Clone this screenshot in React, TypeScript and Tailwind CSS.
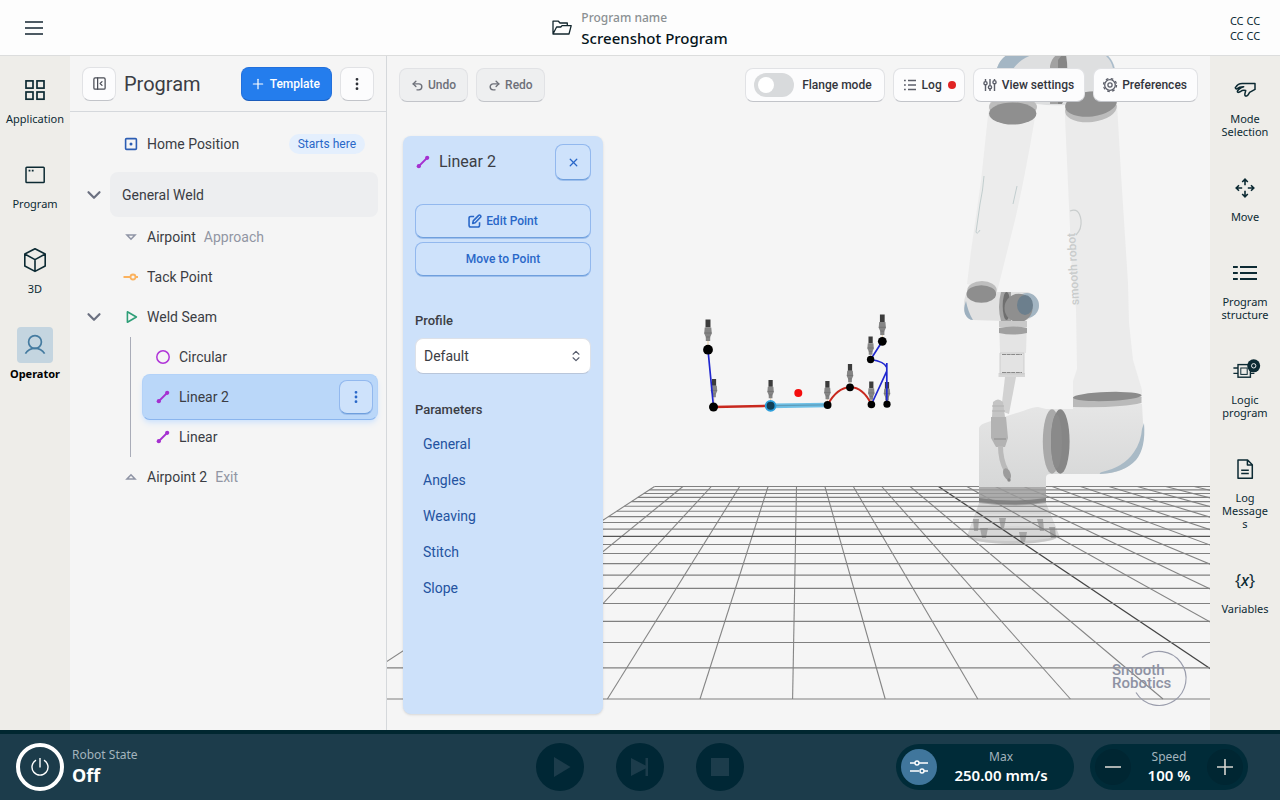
import { useState, type ReactNode } from 'react'
import { ChevronDown, ChevronsUpDown, EllipsisVertical, PanelLeftClose, Plus, Redo2, Undo2, X } from 'lucide-react'

const BUTTON = 'flex items-center rounded-lg border border-[#e1e2e5] border-b-[#c2c4c9] text-xs font-medium'
const BLUE_BUTTON = 'flex items-center justify-center rounded-lg border border-[#92b8ee] border-b-[#6f9fdd] bg-[#cee2fb] text-xs font-medium text-[#2967c8] shadow-[0_1px_0_#9dbfec]'

// ── Shell icons ───────────────────────────────────────────────────
function RailIcon({ children }: { children: ReactNode }) {
  return (
    <svg viewBox="0 0 36 36" className="size-9" fill="none" stroke="currentColor" strokeWidth="1.7" aria-hidden="true">
      {children}
    </svg>
  )
}

const leftItems = [
  {
    label: 'Application',
    icon: (
      <RailIcon>
        <rect x="9" y="8.9" width="7" height="7.2" />
        <rect x="20" y="8.9" width="7" height="7.2" />
        <rect x="9" y="20" width="7" height="7.2" />
        <rect x="20" y="20" width="7" height="7.2" />
      </RailIcon>
    ),
  },
  {
    label: 'Program',
    icon: (
      <RailIcon>
        <rect x="9" y="10.2" width="18.2" height="15.4" rx="0.8" strokeWidth="1.5" />
        <path d="M11.6 13.7h1.8M14.8 13.7h1.8" strokeWidth="1.8" />
      </RailIcon>
    ),
  },
  {
    label: '3D',
    icon: (
      <RailIcon>
        <path d="M18 6.8 28.2 12v12L18 29.4 7.8 24V12ZM7.8 12 18 17.6 28.2 12M18 17.6v11.8" strokeWidth="1.6" strokeLinejoin="round" />
      </RailIcon>
    ),
  },
  {
    label: 'Operator',
    active: true,
    icon: (
      <RailIcon>
        <circle cx="18" cy="15" r="6.4" />
        <path d="M8.4 26.6C10.6 23 14 21.4 18 21.4s7.4 1.6 9.6 5.2" />
      </RailIcon>
    ),
  },
]

const rightItems = [
  {
    label: 'Mode Selection',
    icon: (
      <RailIcon>
        <path d="M8.8 15.2c1.2-2.2 3.5-3.8 6.4-3.8H28v6l-5.4 3c-1 1.5-1.6 3.3-3 3.6-1.6.2-2-.8-1.7-2.2l.8-3.2c-2-.5-3.7-.2-5 .8-1.5 1-3 1.4-3.4.4-.3-1.3 3.2-4.2 6.4-5-2.6-.1-5 .5-6.9 2-.8.4-1.8-.6-1.4-1.6Z" strokeWidth="1.5" strokeLinejoin="round" />
      </RailIcon>
    ),
  },
  {
    label: 'Move',
    icon: (
      <RailIcon>
        <path d="M18 15.2V9.4M15.2 12 18 9.2l2.8 2.8M18 20.8v5.8M15.2 24l2.8 2.8 2.8-2.8M15.2 18H9.4M12 15.2 9.2 18l2.8 2.8M20.8 18h5.8M24 15.2l2.8 2.8-2.8 2.8" strokeWidth="1.6" />
      </RailIcon>
    ),
  },
  {
    label: 'Program structure',
    icon: (
      <RailIcon>
        <path d="M6 12h4.8M13 12h17M6 18h4.8M13 18h17M6 24h4.8M13 24h17" strokeWidth="2" />
      </RailIcon>
    ),
  },
  {
    label: 'Logic program',
    icon: (
      <RailIcon>
        <rect x="11" y="11.6" width="12.4" height="12.6" strokeWidth="1.4" />
        <rect x="13.8" y="15" width="6.4" height="6.4" strokeWidth="1" />
        <path d="M6.4 15H11M6.4 20.4H11M23.4 20.4h4" strokeWidth="1.3" />
        <circle cx="26.7" cy="12.8" r="6.5" fill="currentColor" stroke="none" />
        <circle cx="26.7" cy="12.8" r="2.2" stroke="#e6e8e8" strokeWidth="1" />
      </RailIcon>
    ),
  },
  {
    label: 'Log Messages',
    icon: (
      <RailIcon>
        <path d="M11 9h9.6l4.7 4.7v13.6H11ZM20.4 9v5h4.9M14.2 19.2h7.6M14.2 22.4h7.6" strokeWidth="1.5" strokeLinejoin="round" />
      </RailIcon>
    ),
  },
  {
    label: 'Variables',
    icon: (
      <span className="flex size-9 items-center justify-center text-base">
        {'{'}
        <i className="font-medium">x</i>
        {'}'}
      </span>
    ),
  },
]

// ── Program tree icons ────────────────────────────────────────────
function TreeIcon({ children, className }: { children: ReactNode; className: string }) {
  return (
    <svg viewBox="0 0 24 24" className={`size-6 shrink-0 ${className}`} fill="none" stroke="currentColor" strokeWidth="1.6" aria-hidden="true">
      {children}
    </svg>
  )
}

const LinearIcon = () => (
  <TreeIcon className="text-[#a530d0]">
    <path d="M7.5 16.5 16.5 7.5" strokeWidth="1.8" />
    <circle cx="7.8" cy="16.2" r="2.1" fill="currentColor" stroke="none" />
    <circle cx="16.2" cy="7.8" r="2.1" fill="currentColor" stroke="none" />
  </TreeIcon>
)

function Row({ icon, label, note, expandable, children }: { icon: ReactNode; label: string; note?: string; expandable?: boolean; children?: ReactNode }) {
  return (
    <div className="flex h-10 items-center pl-3 pr-2">
      <div className="flex w-7">{expandable && <Expander label={label} />}</div>
      <div className="flex flex-1 items-center gap-1 pl-[9px]">
        {icon}
        <span>{label}</span>
        {note && <span className="ml-1 text-[#9195a3]">{note}</span>}
        {children}
      </div>
    </div>
  )
}

function Expander({ label }: { label: string }) {
  return (
    <button aria-label={`Collapse ${label}`} className="flex size-6 items-center justify-center text-[#6b7080]">
      <ChevronDown size={22} strokeWidth={2.4} />
    </button>
  )
}

function ProgramPanel() {
  return (
    <section className="flex w-[317px] shrink-0 flex-col border-r border-[#d5d8db]">
      <div className="flex h-14 items-center border-b border-[#d5d8dc] px-3">
        <button aria-label="Hide panel" className={`${BUTTON} size-[34px] justify-center bg-[#fcfcfd] text-[#494c55]`}>
          <PanelLeftClose size={15} />
        </button>
        <h1 className="ml-2 flex-1 text-xl text-[#3b3d44]">Program</h1>
        <button className="flex h-[34px] items-center gap-1 rounded-lg border border-[#2270dc] border-b-[#1b5cbb] bg-[#247ded] pl-2 pr-[11px] text-xs font-medium text-white">
          <Plus size={16} strokeWidth={1.8} />
          Template
        </button>
        <button aria-label="Program menu" className={`${BUTTON} ml-2 size-[34px] justify-center bg-[#fcfcfd] text-[#2d2f36]`}>
          <EllipsisVertical size={16} strokeWidth={2.2} />
        </button>
      </div>
      <div className="pt-3 text-sm text-[#3b3d44]">
        <Row
          label="Home Position"
          icon={
            <TreeIcon className="text-[#2c5db3]">
              <rect x="6.6" y="6.6" width="10.8" height="10.8" rx="1" />
              <circle cx="12" cy="12" r="1.5" fill="currentColor" stroke="none" />
            </TreeIcon>
          }
        >
          <span className="ml-auto mr-[13px] rounded-full bg-[#e4effd] px-[9px] py-0.5 text-xs text-[#2967c8]">Starts here</span>
        </Row>
        <div className="mt-2 flex items-center gap-1 pl-3 pr-2">
          <Expander label="General Weld" />
          <div className="flex h-[45px] flex-1 items-center rounded-lg bg-[#edeef0] pl-3">General Weld</div>
        </div>
        <Row
          label="Airpoint"
          note="Approach"
          icon={
            <TreeIcon className="text-[#8f94a5]">
              <path d="M8 10h8l-4 4.2Z" />
            </TreeIcon>
          }
        />
        <Row
          label="Tack Point"
          icon={
            <TreeIcon className="text-[#fbb25e]">
              <path d="M4.5 12h7M16.5 12H19" strokeWidth="1.8" />
              <circle cx="14" cy="12" r="2.5" strokeWidth="1.8" />
            </TreeIcon>
          }
        />
        <Row
          label="Weld Seam"
          expandable
          icon={
            <TreeIcon className="text-[#2f9f78]">
              <path d="M8.4 6.8v10.4l9-5.2Z" strokeLinejoin="round" />
            </TreeIcon>
          }
        />
        <div className="ml-[60px] border-l border-[#a9acb8] pl-[11px] pr-2">
          <div className="flex h-10 items-center gap-1 pl-[9px]">
            <TreeIcon className="text-[#b035d8]">
              <circle cx="12" cy="12" r="6.2" strokeWidth="1.5" />
            </TreeIcon>
            Circular
          </div>
          <div className="-my-[3px] flex h-[46px] items-center gap-1 rounded-lg border border-[#b3d2f8] border-b-[#8ab5ee] bg-[#bad7f9] pl-2 pr-1 shadow-md shadow-blue-200/60">
            <LinearIcon />
            Linear 2
            <button aria-label="Linear 2 menu" className={`${BLUE_BUTTON} ml-auto size-[34px]`}>
              <EllipsisVertical size={16} strokeWidth={2.2} />
            </button>
          </div>
          <div className="flex h-10 items-center gap-1 pl-[9px]">
            <LinearIcon />
            Linear
          </div>
        </div>
        <Row
          label="Airpoint 2"
          note="Exit"
          icon={
            <TreeIcon className="text-[#8f94a5]">
              <path d="M8 14h8l-4-4.2Z" />
            </TreeIcon>
          }
        />
      </div>
    </section>
  )
}

// ── 3D scene ──────────────────────────────────────────────────────
// Floor grid is 20x20 cells; cell width on screen grows linearly with y
const CELLS = 20
const FAR = { y: 486.5, x: 654.5, cell: 28.4 }
const NEAR = { y: 699, x: 329.6, cell: 92.6 }

function rowY(k: number) {
  const inv = 1 / FAR.cell + (k / CELLS) * (1 / NEAR.cell - 1 / FAR.cell)
  return FAR.y + ((1 / inv - FAR.cell) * (NEAR.y - FAR.y)) / (NEAR.cell - FAR.cell)
}

function Floor() {
  const lines = Array.from({ length: CELLS + 1 }, (_, k) => k)
  return (
    <g>
      {lines.map(k => (
        <line key={`c${k}`} x1={FAR.x + k * FAR.cell} y1={FAR.y} x2={NEAR.x + k * NEAR.cell} y2={NEAR.y} stroke={k === 10 ? '#444' : '#858585'} strokeWidth={k === 10 ? 1.3 : 1.1} />
      ))}
      {lines.map(k => {
        const y = rowY(k)
        const t = (y - FAR.y) / (NEAR.y - FAR.y)
        const left = FAR.x + t * (NEAR.x - FAR.x)
        return <line key={`r${k}`} x1={left} y1={y} x2={1400} y2={y} stroke={k === 10 ? '#555' : '#808080'} strokeWidth={k === 10 ? 1.3 : 1.1} />
      })}
    </g>
  )
}

function RobotFoot() {
  return (
    <g>
      <path d="M979 503h67l13 32q-3 8-46 9-43-1-46-8Z" fill="#cfcfcf" opacity="0.8" />
      <path d="M976 514h74l7 17q-10-5-44-5t-44 5Z" fill="#dedede" opacity="0.8" />
      <path d="M967 535q12 6 46 6t46-6q-1 8-46 9-45-1-46-9Z" fill="#c2c2c2" opacity="0.7" />
      <g fill="#a6a6a6">
        <path d="M973 519h6l-1 12h-4ZM980 528h8l-2 10h-4ZM999 518h7l-2 10h-3ZM1019 532h8l-2 10h-4ZM1037 519h6l1 12h-4ZM1049 527h6l1 11h-5Z" />
      </g>
    </g>
  )
}

function Robot() {
  return (
    <g>
      {/* elbow */}
      <path d="M997 68q3-9 10-13h100q6 5 8 13l2 36-52 1q-14 1-28-1l-48 4Z" fill="#dedfe0" />
      <path d="M997 68q3-9 10-13h25q-12 4-19 14Z" fill="#a4b6c4" />
      <path d="M1106 55q6 5 8 14" stroke="#a9bccb" strokeWidth="1.5" fill="none" />
      <path d="M1050 104V66q2-9 7-11h9v44l-5 5Z" fill="#a2a2a2" />
      <path d="M1058 104V60l4-5h4q2 10 1 25t-5 24Z" fill="#868686" />
      {/* forearm */}
      <path d="M989 106h48l-7 40q-8 44-15 74l-18 72-30-8 4-33 10-70Z" fill="#ececec" />
      <ellipse cx="1013" cy="107" rx="24" ry="11" fill="#bdbdbd" />
      <ellipse cx="1012.7" cy="113.5" rx="23.7" ry="11" fill="#8f8f8f" />
      <path d="M984 176q-1 14-4 28l-4 28q1 3 4-2M1017 186l-4 18" stroke="#bccacb" strokeWidth="0.9" fill="none" />
      {/* upper arm */}
      <path d="M1065 104h52l4 70 7 109 1 40 4 37 9 30v8h-69v-17l4-12-1-60-4-36-7-156Z" fill="#ebebeb" />
      <ellipse cx="1091" cy="109" rx="26" ry="13" fill="#bcbcbc" transform="rotate(-7 1091 109)" />
      <ellipse cx="1091" cy="104" rx="26" ry="12.5" fill="#8f8f8f" transform="rotate(-7 1091 104)" />
      <path d="M1070 211q9-4 11 9 1 9-5 15" stroke="#c9cdcd" strokeWidth="1.2" fill="none" />
      <text transform="translate(1079 305) rotate(-93)" fontSize="12" fontWeight="500" fill="#c9cccc" fontFamily="Roboto, sans-serif">
        smooth robot
      </text>
      {/* wrist */}
      <path d="M967 292q-4 8-3 18 2 9 9 10l32 1h20q10-4 14-14 0-11-11-15h-31Z" fill="#e1e1e1" />
      <path d="M966 301q-3 8-1 13 3 6 8 6-5-8-7-19Z" fill="#9db0bf" />
      <ellipse cx="982" cy="290" rx="14.7" ry="9" fill="#bebebe" />
      <ellipse cx="981.3" cy="294" rx="14.8" ry="8.8" fill="#8e8e8e" />
      <path d="M1001 292h10v29h-10q-4-14 0-29Z" fill="#a2a2a2" />
      <ellipse cx="1006.5" cy="306" rx="3.8" ry="14" fill="#6f6f6f" />
      <ellipse cx="1027" cy="305.5" rx="12" ry="12.5" fill="#a3b5c2" />
      <ellipse cx="1018.5" cy="308" rx="14" ry="14.3" fill="#8f8f8f" />
      <ellipse cx="1025" cy="305" rx="8" ry="10" fill="#6c7f8d" />
      <path d="M999 321h28l-1 32h-26Z" fill="#e4e4e4" />
      <path d="M999 321h28v6h-28Z" fill="#c9c9c9" />
      <path d="M999 328q14-3 28 0v5q-14 3-28 0Z" fill="#a0a0a0" />
      <path d="M1000 353h24v21h-24Z" fill="#e3e3e3" stroke="#c8c8c8" strokeWidth="0.8" />
      <path d="M1002 354.5h20M1002 372.5h20" stroke="#8a8a8a" strokeWidth="1.2" strokeDasharray="4 0.6" />
      <path d="M998.5 373h26.5v4h-26.5Z" fill="#cacaca" opacity="0.7" />
      {/* shoulder and base */}
      <linearGradient id="shell" x1="0" x2="0" y1="0" y2="1">
        <stop offset="0" stopColor="#e6e6e6" />
        <stop offset="1" stopColor="#d6d7d7" />
      </linearGradient>
      <path d="M979 428q1-4 9-6l35-11q10-4 15-4l8 2h27v-3l69-2 1 19q1 30-12 41-10 9-29 10h-52q-4 0-4 4v9h-67Z" fill="url(#shell)" />
      <path d="M1144 423q2 25-8 37-12 13-36 14-1-1 2-2 22-5 32-20 7-10 8-23Z" fill="#a9bac6" />
      <path d="M1073 397h68.5v6q-20 5-68.5 4Z" fill="#bababa" />
      <ellipse cx="1107.3" cy="396.5" rx="34.3" ry="4.5" fill="#8b8b8b" transform="rotate(-2 1107 396)" />
      <ellipse cx="1052" cy="441.5" rx="9.2" ry="32.3" fill="#a9a9a9" />
      <ellipse cx="1060.3" cy="441.5" rx="9.3" ry="32.3" fill="#868686" />
      <ellipse cx="1056.5" cy="441.5" rx="5.5" ry="27" fill="#8a8a8a" />
      <path d="M979 487h67v16q-30 5-67 0Z" fill="#9c9c9c" opacity="0.82" />
      <path d="M979 498q33 5 67 0v4q-30 5-67 0Z" fill="#747474" opacity="0.7" />
      {/* torch */}
      <path d="M1005 377h11l-7 37-8-3Z" fill="#d2d2d2" />
      <path d="M993 402q5-5 10 0l2 15h-13Z" fill="#c4c4c4" />
      <path d="M992 406h12M992 411h13" stroke="#b2b2b2" strokeWidth="1.2" />
      <path d="M991 417h15l2 21-3 9h-9l-5-9Z" fill="#b3b3b3" />
      <path d="M994 439h12" stroke="#999" strokeWidth="1.5" />
      <path d="M1000.5 446q0 14 5.5 24" stroke="#bababa" strokeWidth="5" fill="none" />
      <ellipse cx="1007" cy="474" rx="3.6" ry="6" fill="#9c9c9c" transform="rotate(-22 1007 474)" />
      <circle cx="1009" cy="480" r="1.7" fill="#888" />
    </g>
  )
}

function Torch({ x, y, scale = 0.85 }: { x: number; y: number; scale?: number }) {
  return (
    <g transform={`translate(${x} ${y}) scale(${scale})`}>
      <path d="M0 20v7" stroke="#e8cfa8" strokeWidth="1" />
      <path d="M-2.5 0h5v8h-5Z" fill="#3c3c3c" />
      <path d="M-3.3 8h6.6l.5 6-1.6 3.5v4h-4.4v-4l-1.6-3.5Z" fill="#858585" />
      <path d="M-3.7 13.5h7.4M-2.2 17.5h4.4" stroke="#6c6c6c" strokeWidth="0.7" />
    </g>
  )
}

const torches = [
  { x: 708, y: 319.5, scale: 1 },
  { x: 714, y: 379 },
  { x: 770.6, y: 380 },
  { x: 827.4, y: 381 },
  { x: 850, y: 364 },
  { x: 871.3, y: 381.5 },
  { x: 887, y: 382 },
  { x: 870.6, y: 336.5 },
  { x: 882.3, y: 314.5, scale: 0.95 },
]

const points = [
  [708, 349.7, 4.9],
  [713.5, 407, 4.5],
  [827.6, 405, 3.9],
  [850, 387.3, 3.9],
  [871.4, 404.5, 3.8],
  [887, 404.2, 3.6],
  [870.6, 359.5, 3.7],
  [882.3, 341.3, 4.4],
]

function WeldPath() {
  return (
    <g fill="none">
      {torches.map(t => (
        <Torch key={`${t.x}-${t.y}`} {...t} />
      ))}
      <path d="M708 350l5.500 57M882.3 341.3 870.6 359.5q14 2 16.2 8v36.5M886.800 363v8L871.400 404.5" stroke="#2027cf" strokeWidth="1.7" />
      <path d="M713.5 407l57-1.2" stroke="#c8281e" strokeWidth="2.4" />
      <path d="M827.6 405Q837 387.5 850 387.3T871.400 404.5" stroke="#c8281e" strokeWidth="2" />
      <path d="M770.6 405.9l57-.9" stroke="#6fc0e6" strokeWidth="4.6" />
      <path d="M776 405.6l49-.7" stroke="#5e9dbb" strokeWidth="1.4" />
      {points.map(([cx, cy, r]) => (
        <circle key={`${cx}-${cy}`} cx={cx} cy={cy} r={r} fill="#000" />
      ))}
      <circle cx="770.6" cy="405.8" r="4.9" fill="#123f56" stroke="#2d9fdc" strokeWidth="1.9" />
      <circle cx="798.3" cy="393" r="4" fill="#f40d0d" />
    </g>
  )
}

function Scene() {
  return (
    <svg viewBox="387 56 823 674" preserveAspectRatio="xMidYMid slice" className="absolute inset-0 size-full" role="img" aria-label="Robot view">
      <RobotFoot />
      <Floor />
      <Robot />
      <WeldPath />
      <g fill="#8e92a3" fontFamily="Roboto, sans-serif" fontSize="15" fontWeight="500">
        <text x="1112" y="675">Smooth</text>
        <text x="1112" y="688">Robotics</text>
      </g>
      <path d="M1142 657.5A27 27 0 1 1 1136 692.5" fill="none" stroke="#9a9dac" strokeWidth="1.2" />
    </svg>
  )
}

// ── Point settings ────────────────────────────────────────────────
function PointPanel() {
  return (
    <aside className="ml-1 mt-[34px] mb-1 flex w-[200px] flex-1 flex-col rounded-lg bg-[#cde1fa] px-3 pt-2 shadow-sm">
      <div className="flex items-center">
        <span className="-ml-1 flex">
          <LinearIcon />
        </span>
        <h2 className="ml-1 flex-1 text-base text-[#3b3d44]">Linear 2</h2>
        <button aria-label="Close" className={`${BLUE_BUTTON} size-9`}>
          <X size={13} strokeWidth={2.4} />
        </button>
      </div>
      <div className="mt-6 flex flex-col gap-1">
        <button className={`${BLUE_BUTTON} h-[34px] gap-1`}>
          <svg viewBox="0 0 16 16" className="size-[14px]" fill="none" stroke="currentColor" strokeWidth="1.8" strokeLinejoin="round" aria-hidden="true">
            <path d="M7 2.8H3.2Q1.2 2.8 1.2 4.8v8q0 2 2 2h8q2 0 2-2V9.5" />
            <path d="M5.4 10.7 6 7.8 12.2 1.6q1-.9 2 .1 1 1 .1 2L8.2 10Z" />
          </svg>
          Edit Point
        </button>
        <button className={`${BLUE_BUTTON} h-[34px]`}>Move to Point</button>
      </div>
      <label htmlFor="profile" className="mt-[35px] text-[13px] leading-5 font-medium text-[#3b3d44]">
        Profile
      </label>
      <div className="relative mt-[7px]">
        <select id="profile" className="h-9 w-full appearance-none rounded-lg border border-[#dde1e8] border-b-[#b9c6da] bg-white px-2 text-sm text-[#3b3d44]">
          <option>Default</option>
        </select>
        <ChevronsUpDown size={14} strokeWidth={2} className="pointer-events-none absolute top-[11px] right-2 text-[#555b6b]" />
      </div>
      <h3 className="mt-[26px] text-[13px] leading-5 font-medium text-[#3b3d44]">Parameters</h3>
      <div className="mt-[6px] flex flex-col text-sm text-[#2453a0]">
        {['General', 'Angles', 'Weaving', 'Stitch', 'Slope'].map(name => (
          <button key={name} className="h-9 px-2 text-left">
            {name}
          </button>
        ))}
      </div>
    </aside>
  )
}

function Viewer() {
  const [flange, setFlange] = useState(false)
  return (
    <section className="relative flex flex-1 flex-col overflow-hidden">
      <Scene />
      <div className="relative flex flex-1 flex-col p-3">
        <div className="flex gap-2">
          <button className={`${BUTTON} h-[34px] gap-1 bg-[#eeeff0] px-[11px] text-[#6d7079]`}>
            <Undo2 size={13} strokeWidth={2.6} />
            Undo
          </button>
          <button className={`${BUTTON} h-[34px] gap-1 bg-[#eeeff0] px-[11px] text-[#6d7079]`}>
            <Redo2 size={13} strokeWidth={2.6} />
            Redo
          </button>
          <label className={`${BUTTON} ml-auto h-[34px] gap-2 bg-[#fcfcfd] pl-2 pr-3 text-[#33353c]`}>
            <input
              type="checkbox"
              role="switch"
              checked={flange}
              onChange={e => setFlange(e.target.checked)}
              className="flex h-6 w-10 appearance-none items-center rounded-full bg-[#d8dadc] px-1 before:size-4 before:rounded-full before:bg-white checked:justify-end checked:bg-[#247ded]"
            />
            Flange mode
          </label>
          <button className={`${BUTTON} h-[34px] gap-1 bg-[#fcfcfd] px-2 text-[#33353c]`}>
            <svg viewBox="0 0 16 16" className="size-4" stroke="#5b5e69" strokeWidth="1.4" aria-hidden="true">
              <path d="M2 3.5h1.8M2 8h1.8M2 12.5h1.8M6 3.5h8M6 8h8M6 12.5h8" />
            </svg>
            Log
            <span className="ml-0.5 size-2 rounded-full bg-[#e02424]" />
          </button>
          <button className={`${BUTTON} h-[34px] gap-1 bg-[#fcfcfd] pl-2 pr-[10px] text-[#33353c]`}>
            <svg viewBox="0 0 16 16" className="size-4" fill="none" stroke="#5b5e69" strokeWidth="1.4" aria-hidden="true">
              <path d="M3.5 2v2.500M3.5 8v6M8 2v6.500M8 12v2M12.5 2v1.500M12.5 7v7" />
              <circle cx="3.5" cy="6.2" r="1.6" />
              <circle cx="8" cy="10.2" r="1.6" />
              <circle cx="12.5" cy="5.2" r="1.6" />
            </svg>
            View settings
          </button>
          <button className={`${BUTTON} h-[34px] gap-1 bg-[#fcfcfd] pl-2 pr-[10px] text-[#33353c]`}>
            <svg viewBox="0 0 16 16" className="size-4" fill="none" stroke="#5b5e69" aria-hidden="true">
              <circle cx="8" cy="8" r="5.3" strokeWidth="1.3" />
              <circle cx="8" cy="8" r="2.1" strokeWidth="1.3" />
              <circle cx="8" cy="8" r="6.5" strokeWidth="1.3" strokeDasharray="2.6 2.505" />
            </svg>
            Preferences
          </button>
        </div>
        <PointPanel />
      </div>
    </section>
  )
}

// ── Bottom bar ────────────────────────────────────────────────────
function Footer() {
  return (
    <footer className="grid h-[70px] grid-cols-[1fr_auto_1fr] items-center border-t-4 border-[#002730] bg-[#1c3c4b] text-white">
      <div className="flex items-center gap-2 pl-4">
        <button aria-label="Power" className="flex size-12 items-center justify-center rounded-full border-4 border-white">
          <svg viewBox="0 0 20 20" className="size-5" fill="none" stroke="currentColor" strokeWidth="1.4" aria-hidden="true">
            <path d="M10 1v9.500M6 3.200a8 8 0 1 0 8 0" />
          </svg>
        </button>
        <div>
          <div className="text-xs text-[#a3b4bd]">Robot State</div>
          <div className="text-lg leading-6 font-bold">Off</div>
        </div>
      </div>
      <div className="flex gap-8">
        <button disabled aria-label="Play" className="size-12 rounded-full bg-[#002735] text-[#1c3c4b]">
          <svg viewBox="0 0 48 48" fill="currentColor" aria-hidden="true">
            <path d="M18 14v20l16.500-10Z" />
          </svg>
        </button>
        <button disabled aria-label="Step" className="size-12 rounded-full bg-[#002735] text-[#1c3c4b]">
          <svg viewBox="0 0 48 48" fill="currentColor" aria-hidden="true">
            <path d="M15 15v18l14.500-7.500V33H32V15h-2.500v7.500Z" />
          </svg>
        </button>
        <button disabled aria-label="Stop" className="size-12 rounded-full bg-[#002735] text-[#1c3c4b]">
          <svg viewBox="0 0 48 48" fill="currentColor" aria-hidden="true">
            <path d="M15 15h18v18H15Z" />
          </svg>
        </button>
      </div>
      <div className="flex justify-end gap-4 pr-8 text-center">
        <div className="flex h-[46px] w-[178px] items-center rounded-full bg-[#002b38] px-[5px]">
          <button aria-label="Speed limits" className="flex size-9 items-center justify-center rounded-full bg-[#40769c]">
            <svg viewBox="0 0 20 16" className="w-5" fill="none" stroke="currentColor" strokeWidth="1.4" aria-hidden="true">
              <path d="M1 4h5M10 4h9M1 12h9M15 12h4" />
              <circle cx="8" cy="4" r="2" />
              <circle cx="13" cy="12" r="2" />
            </svg>
          </button>
          <div className="flex-1 pr-1">
            <div className="text-xs text-[#a3b4bd]">Max</div>
            <div className="text-[15px] leading-5 font-semibold">250.00 mm/s</div>
          </div>
        </div>
        <div className="flex h-[46px] w-[158px] items-center rounded-full bg-[#002b38] px-[5px]">
          <button aria-label="Slower" className="flex size-9 items-center justify-center rounded-full bg-[#002632]">
            <svg viewBox="0 0 16 16" className="size-4" stroke="#d5d5d0" strokeWidth="1.6" aria-hidden="true">
              <path d="M0 8h16" />
            </svg>
          </button>
          <div className="flex-1">
            <div className="text-xs text-[#a3b4bd]">Speed</div>
            <div className="text-[15px] leading-5 font-semibold">100 %</div>
          </div>
          <button aria-label="Faster" className="flex size-9 items-center justify-center rounded-full bg-[#002632]">
            <svg viewBox="0 0 16 16" className="size-4" stroke="#d5d5d0" strokeWidth="1.6" aria-hidden="true">
              <path d="M0 8h16M8 0v16" />
            </svg>
          </button>
        </div>
      </div>
    </footer>
  )
}

export default function App() {
  return (
    <div className="flex min-h-screen flex-col bg-[#f5f5f5] font-['Noto_Sans',sans-serif] text-[#0c2a33]">
      <header className="flex h-14 items-center border-b border-[#dcdddd] bg-[#fdfdfd]">
        <div className="flex w-[70px] pl-6">
          <button aria-label="Menu" className="text-[#4d5a63]">
            <svg viewBox="0 0 20 16" className="w-5" stroke="currentColor" strokeWidth="1.8" aria-hidden="true">
              <path d="M1 2h18M1 8h18M1 14h18" />
            </svg>
          </button>
        </div>
        <div className="flex flex-1 items-center justify-center gap-[9px]">
          <svg viewBox="0 0 20 16" className="w-5" fill="none" stroke="#12262d" strokeWidth="1.3" strokeLinejoin="round" aria-hidden="true">
            <path d="M1 14V1.2h5.400L8 3h7.300v2.800M1 14 4.600 7h4.200l1.200-1.400h9.200L17 14Z" />
          </svg>
          <div>
            <div className="text-xs leading-5 font-medium text-[#8b9093]">Program name</div>
            <div className="text-[15px] leading-5 font-medium text-[#06141a]">Screenshot Program</div>
          </div>
        </div>
        <div className="w-[70px] text-center text-[11px] leading-[15px]">
          CC CC
          <br />
          CC CC
        </div>
      </header>
      <div className="flex flex-1">
        <nav className="flex w-[70px] shrink-0 flex-col items-center gap-8 bg-[#eeede9] pt-4">
          {leftItems.map(({ label, icon, active }) => (
            <button key={label} className="flex flex-col items-center gap-1 text-[11px] leading-[13px]">
              <span className={active ? 'rounded bg-[#c4d5e0] text-[#457ba0]' : ''}>{icon}</span>
              <span className={active ? 'font-bold text-black' : ''}>{label}</span>
            </button>
          ))}
        </nav>
        <main className="flex flex-1 font-[Roboto,sans-serif]">
          <ProgramPanel />
          <Viewer />
        </main>
        <nav className="flex w-[70px] shrink-0 flex-col items-center gap-8 bg-[#eeede9] pt-4">
          {rightItems.map(({ label, icon }) => (
            <button key={label} className="flex w-[50px] flex-col items-center gap-1 text-[11px] leading-[13px]">
              {icon}
              <span className="w-full wrap-break-word">{label}</span>
            </button>
          ))}
        </nav>
      </div>
      <Footer />
    </div>
  )
}
